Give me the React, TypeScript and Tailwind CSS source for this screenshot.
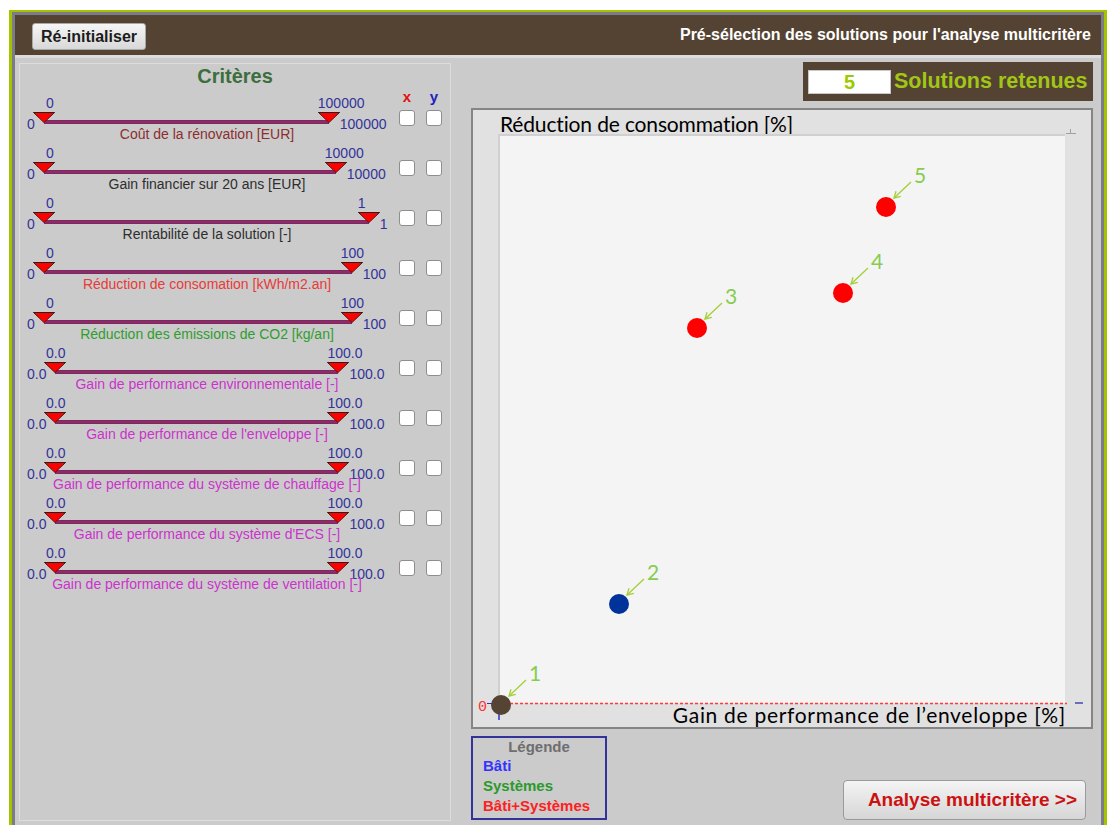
import React from 'react';

type Criterion = {
  lo: string;
  hi: string;
  span: string;
  label: string;
  color: string;
};

// one row per criterion, span = width of the track between both thumbs
const criteria: Criterion[] = [
  { lo: '0', hi: '100000', span: 'w-[307px]', label: 'Coût de la rénovation [EUR]', color: 'text-[#8b2e2e]' },
  { lo: '0', hi: '10000', span: 'w-[314px]', label: 'Gain financier sur 20 ans [EUR]', color: 'text-[#2e2e2e]' },
  { lo: '0', hi: '1', span: 'w-[347px]', label: 'Rentabilité de la solution [-]', color: 'text-[#2e2e2e]' },
  { lo: '0', hi: '100', span: 'w-[330px]', label: 'Réduction de consomation [kWh/m2.an]', color: 'text-[#e83a3a]' },
  { lo: '0', hi: '100', span: 'w-[330px]', label: 'Réduction des émissions de CO2 [kg/an]', color: 'text-[#2f9e2f]' },
  { lo: '0.0', hi: '100.0', span: 'w-[305px]', label: 'Gain de performance environnementale [-]', color: 'text-[#cc33cc]' },
  { lo: '0.0', hi: '100.0', span: 'w-[305px]', label: "Gain de performance de l'enveloppe [-]", color: 'text-[#cc33cc]' },
  { lo: '0.0', hi: '100.0', span: 'w-[305px]', label: 'Gain de performance du système de chauffage [-]', color: 'text-[#cc33cc]' },
  { lo: '0.0', hi: '100.0', span: 'w-[305px]', label: "Gain de performance du système d'ECS [-]", color: 'text-[#cc33cc]' },
  { lo: '0.0', hi: '100.0', span: 'w-[305px]', label: 'Gain de performance du système de ventilation [-]', color: 'text-[#cc33cc]' },
];

type Solution = { id: number; x: number; y: number; fill: string };

// positions in plot pixels (origin = top-left of the plot area)
const solutions: Solution[] = [
  { id: 1, x: 1, y: 569, fill: '#554433' },
  { id: 2, x: 119, y: 468, fill: '#003399' },
  { id: 3, x: 197, y: 192, fill: '#ff0000' },
  { id: 4, x: 343, y: 157, fill: '#ff0000' },
  { id: 5, x: 386, y: 71, fill: '#ff0000' },
];

function Thumb() {
  return (
    <svg width="22" height="11" viewBox="0 0 22 11" className="block">
      <polygon points="0.5,0.5 21.5,0.5 11,10.5" fill="#ff0000" stroke="#5a1010" strokeWidth="1" />
      <line x1="0.5" y1="0.5" x2="21.5" y2="0.5" stroke="#222" strokeWidth="1" />
    </svg>
  );
}

function RangeSlider({ c }: { c: Criterion }) {
  return (
    <div className="w-[360px] h-[50px] flex flex-col">
      <div className="h-[33px] flex items-start text-[14px] leading-[14px] text-[#33339a] whitespace-nowrap">
        <span className="mt-[23px]">{c.lo}</span>
        <div className={`relative h-[33px] -ml-[2px] shrink-0 ${c.span}`}>
          <span className="absolute top-[2px] left-0 w-[21px] text-right">{c.lo}</span>
          <span className="absolute top-[2px] left-[calc(100%-22px)]">{c.hi}</span>
          <div className="absolute top-[26px] left-[11px] right-[11px] h-[4px] bg-[#d01818] border-y border-[#3b3bb0]" />
          <div className="absolute top-[18px] left-0">
            <Thumb />
          </div>
          <div className="absolute top-[18px] right-0">
            <Thumb />
          </div>
        </div>
        <span className="mt-[23px]">{c.hi}</span>
      </div>
      <div className={`text-center text-[14px] leading-[15px] whitespace-nowrap ${c.color}`}>{c.label}</div>
    </div>
  );
}

function Box() {
  return <div className="w-[16px] h-[16px] bg-white border border-[#8e8e8e] rounded-[3px]" />;
}

function CriteriaPanel() {
  return (
    <div className="ml-[4px] mt-[5px] w-[432px] h-[758px] border border-[#dddddd] flex flex-col">
      <div className="h-[30px] leading-[24px] text-center text-[20px] font-bold text-[#3d6e3d]">Critères</div>
      <div className="flex pl-[7px]">
        <div className="flex flex-col">
          {criteria.map((c) => (
            <RangeSlider key={c.label} c={c} />
          ))}
        </div>
        <div className="flex flex-col ml-[12px]">
          <div className="-mt-[5px] h-[21px] flex gap-[11px] text-[15px] leading-[16px] font-bold">
            <span className="w-[16px] text-center text-[#e01010]">x</span>
            <span className="w-[16px] text-center text-[#2020c0]">y</span>
          </div>
          {criteria.map((c) => (
            <div key={c.label} className="h-[50px] flex gap-[11px]">
              <Box />
              <Box />
            </div>
          ))}
        </div>
      </div>
    </div>
  );
}

function Plot() {
  return (
    <div className="relative ml-[25px] mr-[26px] h-[569px] bg-[#f4f4f4] border-l-2 border-t-2 border-[#d0d0d0]">
      <svg className="absolute inset-0 w-full h-full overflow-visible" style={{ fontFamily: 'Lato, sans-serif' }}>
        {/* zero line and axis ticks */}
        <line x1="10" y1="567.5" x2="567" y2="567.5" stroke="#ff3a3a" strokeWidth="1.3" strokeDasharray="3 2" />
        <line x1="-13" y1="567.5" x2="-4" y2="567.5" stroke="#3030c0" strokeWidth="1" />
        <line x1="-1" y1="577" x2="-1" y2="584" stroke="#3030c0" strokeWidth="1.5" />
        <line x1="575" y1="567" x2="583" y2="567" stroke="#4848a8" strokeWidth="1.5" />
        <line x1="566" y1="-2.5" x2="576" y2="-2.5" stroke="#a0a0a0" strokeWidth="1" />
        <line x1="570.5" y1="-7" x2="570.5" y2="-2.5" stroke="#a0a0a0" strokeWidth="1" />
        <text x="-22" y="575" fontSize="15" fill="#ff3030" fontFamily="'Liberation Mono', monospace">
          0
        </text>
        {solutions.map((s) => (
          <g key={s.id}>
            <circle cx={s.x} cy={s.y} r="10" fill={s.fill} />
            <line x1={s.x + 25} y1={s.y - 25} x2={s.x + 8} y2={s.y - 9} stroke="#a6cf3a" strokeWidth="1.3" />
            <polyline
              points={`${s.x + 14.8},${s.y - 10.6} ${s.x + 8},${s.y - 9} ${s.x + 10},${s.y - 15.7}`}
              fill="none"
              stroke="#a6cf3a"
              strokeWidth="1.3"
            />
            <text x={s.x + 28} y={s.y - 24} fontSize="21" fill="#86cc4e">
              {s.id}
            </text>
          </g>
        ))}
      </svg>
    </div>
  );
}

function Chart() {
  return (
    <div className="mt-[7px] h-[621px] border-2 border-[#858585] bg-[#e1e1e1] flex flex-col font-['Lato',sans-serif] text-[21px] text-black whitespace-nowrap">
      <div className="h-[24px] pt-[2px] pl-[27px] leading-[24px] tracking-[-0.15px]">Réduction de consommation [%]</div>
      <Plot />
      <div className="h-[24px] leading-[24px] text-right pr-[25px] tracking-[0.7px]">
        Gain de performance de l’enveloppe [%]
      </div>
    </div>
  );
}

function Legend() {
  return (
    <div className="w-[136px] h-[84px] border-2 border-[#333399] pl-[10px] font-bold text-[15px]">
      <div className="leading-[18px] text-center -ml-[10px] text-[#6e6e6e]">Légende</div>
      <div className="leading-[20px] text-[#3333ff]">Bâti</div>
      <div className="leading-[20px] text-[#2a9a2a]">Systèmes</div>
      <div className="leading-[20px] text-[#ff2020]">Bâti+Systèmes</div>
    </div>
  );
}

export default function App() {
  return (
    <div className="w-[1111px] h-[825px] overflow-hidden bg-white pt-[10px] pl-[9px] font-['Liberation_Sans',Arial,sans-serif]">
      <div className="w-[1098px] h-[815px] border-l-[3px] border-t-2 border-r-[3px] border-[#a5c400]">
        <div className="h-full border-l-[3px] border-t-[3px] border-r-[3px] border-[#7c7c86] bg-[#cbcbcb] flex flex-col">
          <div className="h-[43px] shrink-0 bg-[#544333] border-b-[3px] border-[#dcdcdc] flex items-center justify-between pl-[17px] pr-[10px]">
            <button className="mt-[3px] w-[114px] h-[27px] rounded-[3px] border border-[#a8a8a8] bg-gradient-to-b from-[#f6f6f6] to-[#d8d8d8] text-[16px] font-bold text-[#1c1c1c] leading-none">
              Ré-initialiser
            </button>
            <span className="text-[16px] font-bold text-white whitespace-nowrap">
              Pré-sélection des solutions pour l'analyse multicritère
            </span>
          </div>

          <div className="flex">
            <CriteriaPanel />

            <div className="ml-[20px] w-[622px] flex flex-col">
              <div className="self-end mt-[4px] h-[39px] w-[290px] bg-[#544333] flex items-center pl-[5px]">
                <div className="w-[83px] h-[24px] bg-white border border-[#c8c8c8] flex items-center justify-center text-[20px] font-bold text-[#99cc00]">
                  5
                </div>
                <span className="ml-[3px] text-[21.5px] font-bold text-[#a2c617] whitespace-nowrap">Solutions retenues</span>
              </div>

              <Chart />

              <div className="mt-[7px] flex justify-between items-end">
                <Legend />
                <button className="mr-[7px] w-[243px] h-[40px] rounded-[4px] border border-[#9a9a9a] bg-gradient-to-b from-[#f4f4f4] to-[#d6d6d6] text-right pr-[8px] text-[19px] font-bold text-[#cc1111]">
                  Analyse multicritère &gt;&gt;
                </button>
              </div>
            </div>
          </div>
        </div>
      </div>
    </div>
  );
}
